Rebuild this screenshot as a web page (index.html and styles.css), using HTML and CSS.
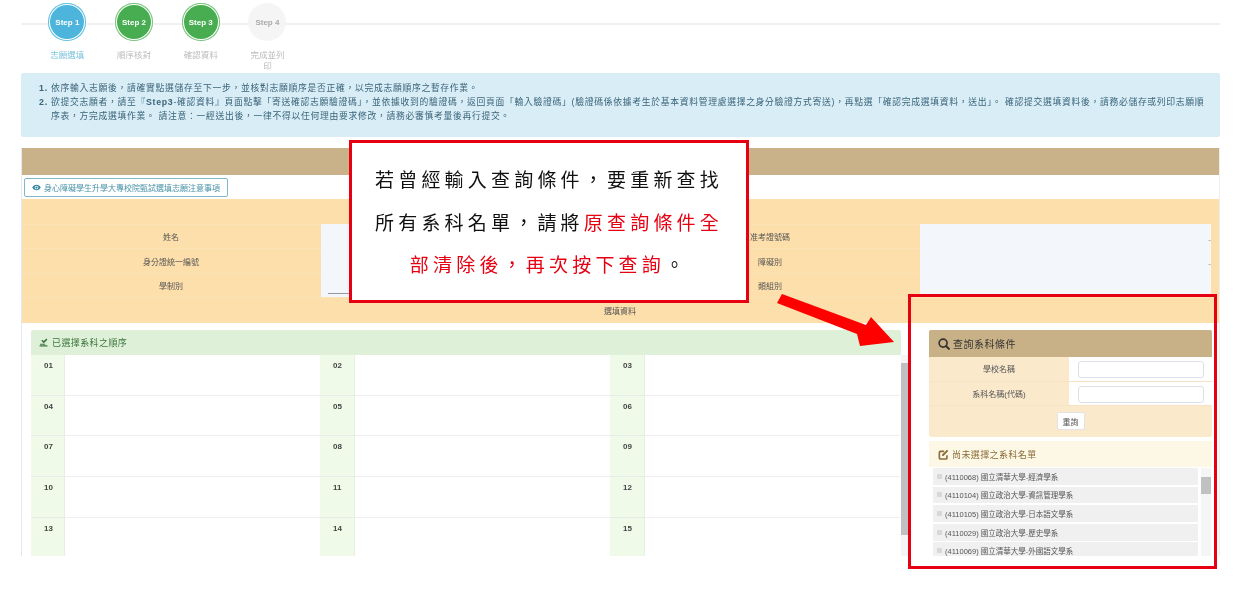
FILE: index.html
```html
<!DOCTYPE html>
<html lang="zh-Hant">
<head>
<meta charset="utf-8">
<title>志願選填</title>
<link rel="stylesheet" href="styles.css">
</head>
<body>
<div class="page">
  <div class="steps">
    <div class="step active"><div class="circle">Step 1</div><div class="step-label">志願選填</div></div>
    <div class="step done"><div class="circle">Step 2</div><div class="step-label">順序核對</div></div>
    <div class="step done"><div class="circle">Step 3</div><div class="step-label">確認資料</div></div>
    <div class="step"><div class="circle">Step 4</div><div class="step-label">完成並列印</div></div>
  </div>

  <div class="alert">
    <ol class="alert-list">
      <li>依序輸入志願後&#xFF0C;請確實點選儲存至下一步&#xFF0C;並核對志願順序是否正確&#xFF0C;以完成志願順序之暫存作業。</li>
      <li>欲提交志願者&#xFF0C;請至『<b>Step3</b>-確認資料』頁面點擊「寄送確認志願驗證碼」&#xFF0C;並依據收到的驗證碼&#xFF0C;返回頁面「輸入驗證碼」(驗證碼係依據考生於基本資料管理處選擇之身分驗證方式寄送)&#xFF0C;再點選「確認完成選填資料&#xFF0C;送出」。 確認提交選填資料後&#xFF0C;請務必儲存或列印志願順序表&#xFF0C;方完成選填作業。 請注意&#xFF1A;一經送出後&#xFF0C;一律不得以任何理由要求修改&#xFF0C;請務必審慎考量後再行提交。</li>
    </ol>
  </div>

  <div class="panel">
    <div class="panel-head"></div>
    <div class="notice-row">
      <span class="notice-btn">
        <svg class="ic" viewBox="0 0 16 16"><path fill="#31859c" d="M8 3C4.500 3 1.700 5.400.5 8c1.200 2.600 4 5 7.500 5s6.300-2.400 7.500-5C14.300 5.400 11.500 3 8 3zm0 8.300A3.300 3.300 0 1 1 8 4.700a3.300 3.300 0 0 1 0 6.600zM8 6a2 2 0 1 0 0 4 2 2 0 0 0 0-4z"/></svg>
        身心障礙學生升學大專校院甄試選填志願注意事項
      </span>
    </div>

    <div class="info">
      <div class="info-blank"></div>
      <div class="info-grid">
        <div class="info-label">姓名</div><div class="info-value"></div><div class="info-label">准考證號碼</div><div class="info-value v-tall"><span class="dash">-</span></div>
        <div class="info-label">身分證統一編號</div><div class="info-value"></div><div class="info-label">障礙別</div><div class="info-value v-tall"><span class="dash">-</span></div>
        <div class="info-label">學制別</div><div class="info-value"><span class="rule"></span></div><div class="info-label">類組別</div><div class="info-value v-tall"></div>
      </div>
      <div class="info-title">選填資料</div>
    </div>

    <div class="work">
      <section class="chosen">
        <div class="chosen-body">
          <div class="chosen-head">
            <svg class="ic-head" viewBox="0 0 16 16"><path fill="#3c763d" d="M1 13h14v2H1zM2 10h9v2H2zM4 5l2-2 2.500 2.500L13 1l2 2-6.500 6.500z"/></svg>
            已選擇系科之順序
          </div>
          <div class="chosen-grid">
            <div class="num">01</div><div class="cell"></div><div class="num">02</div><div class="cell"></div><div class="num">03</div><div class="cell"></div>
            <div class="num">04</div><div class="cell"></div><div class="num">05</div><div class="cell"></div><div class="num">06</div><div class="cell"></div>
            <div class="num">07</div><div class="cell"></div><div class="num">08</div><div class="cell"></div><div class="num">09</div><div class="cell"></div>
            <div class="num">10</div><div class="cell"></div><div class="num">11</div><div class="cell"></div><div class="num">12</div><div class="cell"></div>
            <div class="num">13</div><div class="cell"></div><div class="num">14</div><div class="cell"></div><div class="num">15</div><div class="cell"></div>
          </div>
        </div>
        <div class="bar-left"><div class="bar-left-thumb"></div></div>
      </section>

      <section class="side">
        <div class="search">
          <div class="search-head">
            <svg class="ic-head dark" viewBox="0 0 16 16"><path fill="none" stroke="#333" stroke-width="2.200" d="M6.800 1.500a5.300 5.300 0 1 0 0 10.600 5.300 5.300 0 0 0 0-10.600z"/><path stroke="#333" stroke-width="2.800" stroke-linecap="round" d="M11 11l3.500 3.500"/></svg>
            查詢系科條件
          </div>
          <div class="search-row"><div class="search-label">學校名稱</div><div class="search-field"><span class="input"></span></div></div>
          <div class="search-row"><div class="search-label">系科名稱(代碼)</div><div class="search-field"><span class="input"></span></div></div>
          <div class="search-foot"><span class="reset">重詢</span></div>
        </div>
        <div class="pending">
          <div class="pending-head">
            <svg class="ic-head olive" viewBox="0 0 16 16"><path fill="none" stroke="#8a6d3b" stroke-width="2.400" d="M13 9v4a1.500 1.500 0 0 1-1.500 1.500h-8A1.500 1.500 0 0 1 2 13V5a1.500 1.500 0 0 1 1.500-1.500H9"/><path fill="#8a6d3b" d="M6 8l7-7 2 2-7 7H6z"/></svg>
            尚未選擇之系科名單
          </div>
          <div class="pending-body">
            <ul class="dept-list">
              <li class="dept">(4110068) 國立清華大學-經濟學系</li>
              <li class="dept">(4110104) 國立政治大學-資訊管理學系</li>
              <li class="dept">(4110105) 國立政治大學-日本語文學系</li>
              <li class="dept">(4110029) 國立政治大學-歷史學系</li>
              <li class="dept">(4110069) 國立清華大學-外國語文學系</li>
            </ul>
            <div class="bar-right"><div class="bar-right-thumb"></div></div>
          </div>
        </div>
      </section>
    </div>
  </div>
</div>

<div class="callout">
  <p class="callout-text">若曾經輸入查詢條件&#xFF0C;要重新查找<br>所有系科名單&#xFF0C;請將<em>原查詢條件全</em><br><em>部清除後&#xFF0C;再次按下查詢</em>。</p>
</div>
<div class="red-frame"></div>
<svg class="arrow" viewBox="0 0 125 60" width="125" height="60"><polygon fill="#f00" points="7,0 91,31 96,23 119,48 85,52 82,40 2,9"/></svg>
</body>
</html>
```

FILE: styles.css
```css
* { box-sizing: border-box; }
html, body { margin: 0; height: 598px; overflow: hidden; background: #fff; }
body {
  position: relative;
  font-family: "Liberation Sans", "Noto Sans CJK TC", sans-serif;
  color: #555;
}
.page { height: 556px; padding: 3px 26px 0 21px; overflow: hidden; filter: blur(.4px); }

/* steps */
.steps { display: flex; height: 70px; padding-left: 13px; position: relative; }
.steps::before {
  content: ""; position: absolute; left: 0; right: 0; top: 20px; height: 2px; background: #f1f1f1;
}
.step { width: 66.700px; position: relative; text-align: center; }
.circle {
  width: 38px; height: 38px; margin: 0 auto; border-radius: 50%;
  display: flex; align-items: center; justify-content: center;
  font-size: 8px; font-weight: bold; color: #aaa; background: #f5f5f5;
}
.step.active .circle { color: #fff; background: #4db4dc; box-shadow: inset 0 0 0 1px #5bc0de, inset 0 0 0 2px #fff; }
.step.done .circle { color: #fff; background: #47ad50; box-shadow: inset 0 0 0 1px #74c27a, inset 0 0 0 2px #fff; }
.step-label { width: 38px; margin: 9px auto 0; font-size: 8.500px; line-height: 11px; color: #bbb; }
.step.active .step-label { color: #7fc3dc; }

/* alert */
.alert {
  height: 64px; background: #d9edf7; border-radius: 2px; color: #3a6478;
  padding: 8px 10px 0 20px; font-size: 8.800px; line-height: 14px; letter-spacing: .7px;
}
.alert-list { margin: 0; padding: 0 0 0 10px; }
.alert-list li::marker { font-weight: bold; }

/* main panel */
.panel { margin-top: 11px; height: 408px; overflow: hidden; border-left: 1px solid #e6e8f0; border-right: 1px solid #eee; }
.panel-head { height: 27px; background: #c9b28a; }
.notice-row { height: 24px; padding: 3px 2px; }
.notice-btn {
  display: flex; align-items: center; gap: 3px; width: 204px; height: 19px; padding-left: 7px;
  border: 1px solid #7fb8c6; border-radius: 2px; color: #4a93a8; font-size: 8px;
}
.ic { width: 9px; height: 9px; flex: none; }

.info { background: #fddfab; height: 124px; margin-left: -1px; font-size: 8px; color: #555; }
.info-blank { height: 25px; }
.info-grid { display: grid; grid-template-columns: 300px 299px 300px 291px; grid-auto-rows: 24.400px; }
.info-label { display: flex; align-items: center; justify-content: center; border-top: 1px solid #fbe3b7; }
.info-value { background: #f3f7fb; position: relative; }
.dash { position: absolute; right: 0; top: 11px; color: #888; }
.rule { position: absolute; left: 7px; right: 271px; bottom: 3px; height: 1px; background: #999; }
.info-title { height: 26px; line-height: 27px; text-align: center; border-top: 1px solid #fbe3b7; }

.work { display: flex; padding: 7px 0 0 9px; }
.chosen { width: 878px; flex: none; display: flex; }
.chosen-body { flex: 1; }
.chosen-head {
  height: 25px; background: #dff0d8; color: #3c763d; font-size: 9px; letter-spacing: .4px;
  display: flex; align-items: center; gap: 4px; padding-left: 8px; border-radius: 2px 2px 0 0;
}
.ic-head { width: 9px; height: 9px; flex: none; }
.ic-head.dark { width: 12px; height: 12px; }
.ic-head.olive { width: 11px; height: 11px; }
.chosen-grid { display: grid; grid-template-columns: 34px 255px 35px 255px 35px 255px; grid-auto-rows: 40.700px; }
.num {
  background: #effbe8; font-size: 8px; font-weight: bold; color: #444;
  padding: 6px 0 0 13px; border-bottom: 1px solid #e8ece6; border-right: 1px solid #e6efe0;
}
.cell { border-bottom: 1px solid #eee; }
.bar-left { width: 8px; flex: none; margin-top: 25px; padding-top: 8px; background: #f5f5f5; }
.bar-left-thumb { height: 172px; background: #c1c1c1; }

.side { width: 283px; margin-left: 20px; flex: none; }
.search { background: #fae9cb; border-radius: 2px; height: 107px; font-size: 8px; color: #555; }
.search-head {
  height: 27px; background: #c8b186; color: #333; font-size: 10px; letter-spacing: .5px;
  display: flex; align-items: center; gap: 3px; padding-left: 9px; border-radius: 2px 2px 0 0;
}
.search-row { display: flex; height: 24.500px; border-bottom: 1px solid #f5e3c3; }
.search-label { width: 140px; display: flex; align-items: center; justify-content: center; }
.search-field { flex: 1; background: #fff; padding: 4px 8px 0 9px; }
.input { display: block; height: 17px; background: #fff; border: 1px solid #dde0e6; border-radius: 3px; }
.search-foot { display: flex; justify-content: center; padding-top: 6px; }
.reset {
  width: 28px; height: 18px; background: #fff; border: 1px solid #e3e3e3; border-radius: 2px;
  display: flex; align-items: center; justify-content: center;
}
.pending { margin-top: 4px; background: #fdf8e6; }
.pending-head {
  height: 26px; color: #8a6d3b; font-size: 9px; letter-spacing: .4px;
  display: flex; align-items: center; gap: 3px; padding-left: 9px;
}
.pending-body { display: flex; background: #fff; padding-top: 1px; height: 100px; }
.dept-list { list-style: none; margin: 0 0 0 4px; padding: 0; width: 265px; flex: none; }
.dept {
  height: 16.800px; margin-bottom: 1.800px; background: #f0f0f0; font-size: 7.500px; color: #555;
  display: flex; align-items: center; gap: 3px; padding-left: 4px;
}
.dept::before { content: ""; width: 5px; height: 5px; background: #d8d8d8; flex: none; }
.bar-right { width: 10px; margin-left: 3px; background: #f5f5f5; padding-top: 9px; }
.bar-right-thumb { height: 17px; background: #c1c1c1; }

/* annotations over the screenshot */
.callout {
  position: absolute; left: 349px; top: 140px; width: 400px; height: 163px;
  background: #fff; border: 3px solid #e60012; display: flex; justify-content: center; padding-top: 15px;
}
.callout-text {
  margin: 0; text-align: center; color: #111;
  font-family: "Noto Sans CJK TC", sans-serif; font-size: 19px; line-height: 42.500px; letter-spacing: 4.200px;
  filter: blur(.3px);
}
.callout-text em { font-style: normal; color: #e60012; }
.red-frame { position: absolute; left: 908px; top: 294px; width: 309px; height: 275px; border: 3px solid #e60012; }
.arrow { position: absolute; left: 775px; top: 294px; }
```
